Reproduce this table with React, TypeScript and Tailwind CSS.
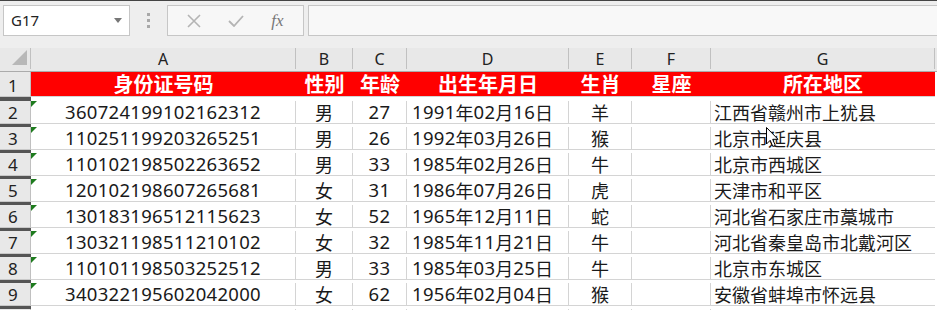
import React from 'react';

const cols = ['A', 'B', 'C', 'D', 'E', 'F', 'G'];
const grid = 'grid grid-cols-[31px_265px_57px_54px_162px_63px_79px_224px]';

const headers = ['身份证号码', '性别', '年龄', '出生年月日', '生肖', '星座', '所在地区'];

const rows = [
  ['360724199102162312', '男', '27', '1991年02月16日', '羊', '', '江西省赣州市上犹县'],
  ['110251199203265251', '男', '26', '1992年03月26日', '猴', '', '北京市延庆县'],
  ['110102198502263652', '男', '33', '1985年02月26日', '牛', '', '北京市西城区'],
  ['120102198607265681', '女', '31', '1986年07月26日', '虎', '', '天津市和平区'],
  ['130183196512115623', '女', '52', '1965年12月11日', '蛇', '', '河北省石家庄市藁城市'],
  ['130321198511210102', '女', '32', '1985年11月21日', '牛', '', '河北省秦皇岛市北戴河区'],
  ['110101198503252512', '男', '33', '1985年03月25日', '牛', '', '北京市东城区'],
  ['340322195602042000', '女', '62', '1956年02月04日', '猴', '', '安徽省蚌埠市怀远县'],
];

const align = ['justify-center', 'justify-center', 'justify-center', 'justify-start pl-[5px]', 'justify-center', 'justify-center', 'justify-start pl-[3px]'];

// digits in the grid font come out a touch larger than the CJK glyphs
function Cell({ text }: { text: string }) {
  const parts = text.split(/(\d+)/).filter(Boolean);
  return (
    <>
      {parts.map((p, k) =>
        /\d/.test(p) ? (
          <span key={k} className="font-['Noto_Sans',sans-serif] text-[18.5px] tracking-[0.3px]">{p}</span>
        ) : (
          <span key={k}>{p}</span>
        )
      )}
    </>
  );
}

function Toolbar() {
  return (
    <div className="h-[47px] bg-[#eeeeee] flex items-start pt-[4px] pl-[3px]">
      <div className="w-[127px] h-[31px] bg-white border border-[#c6c6c6] flex items-center justify-between pl-[7px] pr-[7px]">
        <span className="text-[15px] text-[#222] font-['Noto_Sans',sans-serif]">G17</span>
        <svg width="8" height="5" viewBox="0 0 8 5"><path d="M0 0 L8 0 L4 5 Z" fill="#777" /></svg>
      </div>
      <div className="w-[37px] h-[31px] flex flex-col items-center justify-center gap-[3px]">
        <div className="w-[3px] h-[3px] bg-[#a8a8a8]" />
        <div className="w-[3px] h-[3px] bg-[#a8a8a8]" />
        <div className="w-[3px] h-[3px] bg-[#a8a8a8]" />
      </div>
      <div className="w-[137px] h-[31px] bg-[#f7f7f7] border border-[#c6c6c6] flex items-center justify-around px-[6px]">
        <svg width="14" height="14" viewBox="0 0 14 14"><path d="M1 1 L13 13 M13 1 L1 13" stroke="#b4b4b4" strokeWidth="1.6" /></svg>
        <svg width="16" height="12" viewBox="0 0 16 12"><path d="M1 6 L6 11 L15 1" stroke="#b4b4b4" strokeWidth="1.8" fill="none" /></svg>
        <span className="text-[17px] italic text-[#777] font-['Liberation_Serif',serif]">fx</span>
      </div>
      <div className="ml-[4px] flex-1 h-[31px] bg-[#f8f8f8] border border-[#c6c6c6] border-r-0" />
    </div>
  );
}

function ColumnHeader() {
  return (
    <div className={`${grid} h-[24px] bg-[#e8e8e8] border-b border-[#ababab]`}>
      <div className="relative border-r border-[#c0c0c0]">
        <svg className="absolute right-[3px] bottom-[4px]" width="15" height="15" viewBox="0 0 15 15"><path d="M15 0 L15 15 L0 15 Z" fill="#b8b8b8" /></svg>
      </div>
      {cols.map((c) => (
        <div key={c} className="flex items-center justify-center pt-[2px] border-r border-[#c0c0c0] text-[16px] leading-none text-[#222] font-['Noto_Sans',sans-serif]">
          {c}
        </div>
      ))}
      <div />
    </div>
  );
}

function RowNum({ n }: { n: number }) {
  return (
    <div className="bg-[#e8e8e8] border-r border-[#c0c0c0] border-b border-b-[#c8c8c8] flex items-end pl-[8px] pb-[2px] text-[17px] leading-none text-[#222] font-['Noto_Sans',sans-serif]">
      {n}
    </div>
  );
}

export default function App() {
  return (
    <div className="relative w-[937px] h-[310px] overflow-hidden bg-white border-t border-[#444] font-['Noto_Sans_CJK_SC',sans-serif]">
      <Toolbar />
      <ColumnHeader />

      <div className={`${grid} h-[29px]`}>
        <RowNum n={1} />
        {headers.map((h) => (
          <div key={h} className="bg-[#ff0000] border-b border-[#d4d4d4] flex items-center justify-center text-white font-bold text-[20px] leading-none">
            {h}
          </div>
        ))}
        <div className="bg-[#555]" />
      </div>

      {rows.map((r, i) => (
        <div key={i} className={`${grid} h-[26px]`}>
          <RowNum n={i + 2} />
          {r.map((v, j) => (
            <div
              key={j}
              className={`relative flex items-center ${align[j]} border-b border-r border-[#d4d4d4] text-[18px] leading-none text-[#1a1a1a] ${j === 6 ? 'border-r-0' : ''}`}
            >
              {j === 0 && (
                <svg className="absolute left-0 top-0" width="6" height="6" viewBox="0 0 6 6"><path d="M0 0 L6 0 L0 6 Z" fill="#1e7b1e" /></svg>
              )}
              <Cell text={v} />
            </div>
          ))}
          <div className="bg-[#555]" />
        </div>
      ))}

      <div className={`${grid} h-[10px]`}>
        <div className="bg-[#e8e8e8] border-r border-[#c0c0c0]" />
        {cols.map((c) => (
          <div key={c} className={`border-r border-[#d4d4d4] ${c === 'G' ? 'border-r-0' : ''}`} />
        ))}
        <div className="bg-[#555]" />
      </div>

      <svg className="absolute left-[766px] top-[126px]" width="14" height="21" viewBox="0 0 14 21">
        <path d="M0.5 0.5 L0.5 17 L4.2 13.3 L6.8 19.5 L9.3 18.4 L6.7 12.3 L12 12.3 Z" fill="#fff" stroke="#000" strokeWidth="1" />
      </svg>
    </div>
  );
}
